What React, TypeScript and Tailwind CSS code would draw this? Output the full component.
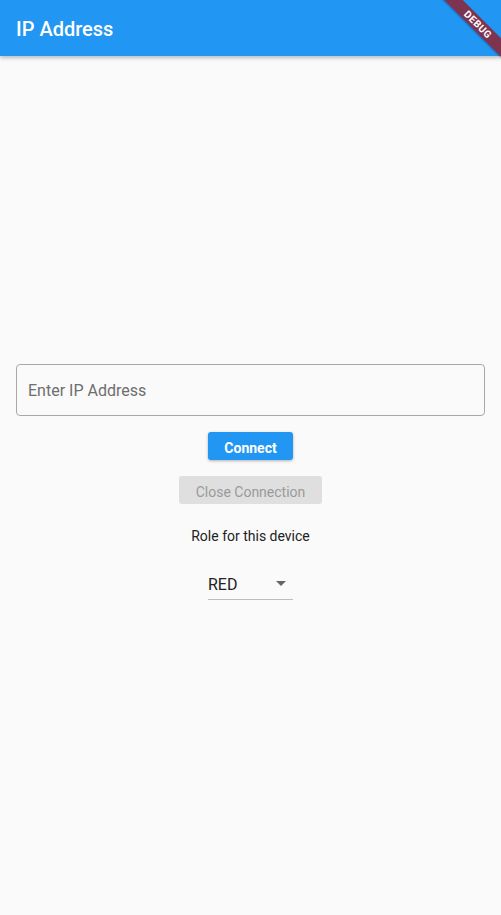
import { useState } from "react";

export default function App() {
  const [ip, setIp] = useState("");

  return (
    <div className="relative flex min-h-[915px] w-full flex-col overflow-hidden bg-[#fafafa] font-['Roboto',sans-serif]">
      {/* App bar */}
      <header className="relative z-10 flex h-14 items-center bg-[#2196f3] px-4 shadow-[0_2px_4px_rgba(0,0,0,0.25)]">
        <h1 className="pt-[2px] text-[20px] font-medium text-white">IP Address</h1>
      </header>

      {/* Debug banner */}
      <div className="pointer-events-none absolute right-[-27px] top-[18px] z-20 flex h-[13px] w-[100px] rotate-45 items-center justify-center bg-[#7e3451] shadow-[0_1px_2px_rgba(0,0,0,0.3)]">
        <span className="text-[10px] font-bold leading-none tracking-[0.5px] text-white">DEBUG</span>
      </div>

      <main className="flex flex-col items-center px-4 pt-[308px]">
        <input
          value={ip}
          onChange={(e) => setIp(e.target.value)}
          placeholder="Enter IP Address"
          className="h-[52px] w-full rounded border border-[#a8a8a8] bg-transparent px-[11px] text-[16px] text-[#222] placeholder:text-[#6e6e6e] focus:outline-none"
        />

        <button className="mt-4 h-7 w-[85px] rounded-[3px] bg-[#2196f3] pt-[4px] text-[14px] font-bold text-white shadow-[0_1px_3px_rgba(0,0,0,0.3)]">
          Connect
        </button>

        <button
          disabled
          className="mt-4 h-7 w-[143px] rounded-[3px] bg-[#dfdfdf] pt-[4px] text-[14px] text-[#9a9a9a]"
        >
          Close Connection
        </button>

        <p className="mt-[24px] text-[14px] leading-4 text-[#222]">Role for this device</p>

        <div className="mt-[30px] flex h-[26px] w-[85px] items-start justify-between border-b border-[#bdbdbd]">
          <span className="pt-px text-[16px] leading-[19px] text-[#222]">RED</span>
          <svg width="24" height="24" viewBox="0 0 24 24" className="-mt-[3px] fill-[#666]">
            <path d="M7 10l5 5 5-5z" />
          </svg>
        </div>
      </main>
    </div>
  );
}
